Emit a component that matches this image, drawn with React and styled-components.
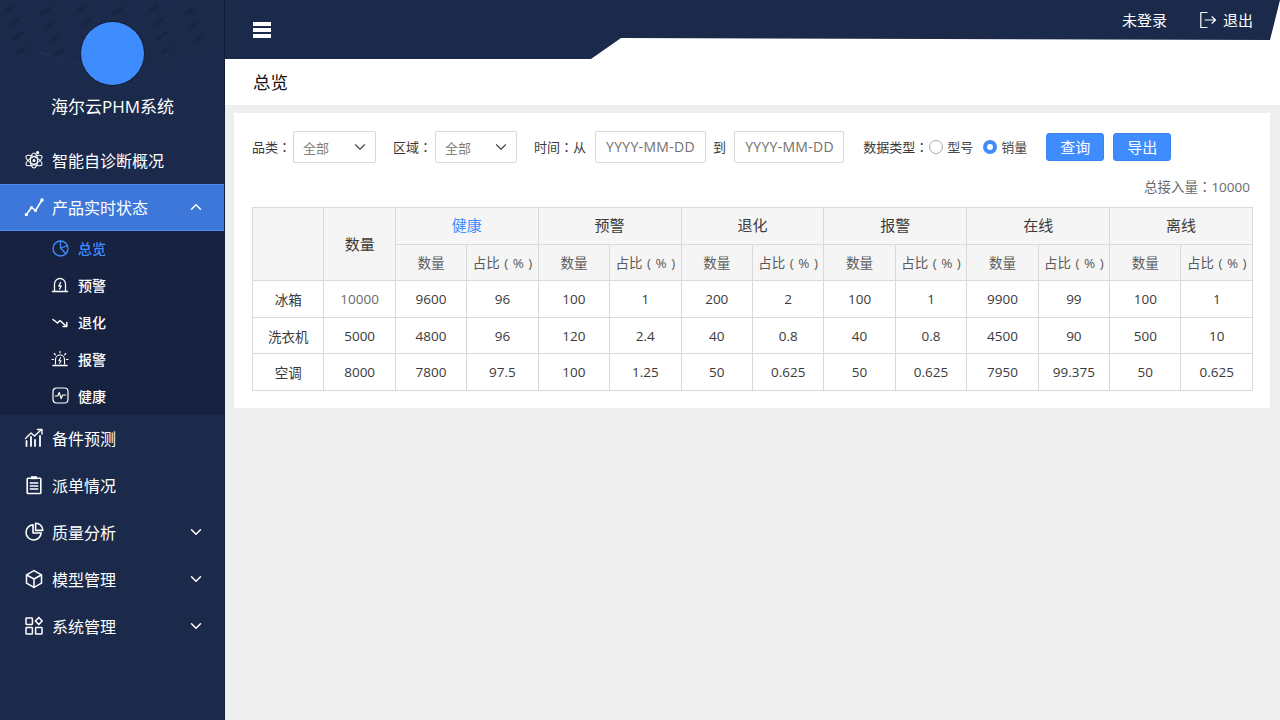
import React from 'react';
import styled, { createGlobalStyle } from 'styled-components';
import { ChevronUp, ChevronDown } from 'lucide-react';

const Global = createGlobalStyle`
  html, body { margin: 0; padding: 0; height: 100%; background: #eeeeee; }
  #root { height: 100%; }
  * { box-sizing: border-box; }
  body { font-family: "Open Sans", "Noto Sans CJK SC", sans-serif; overflow: hidden; }
`;

const Shell = styled.div`display: flex; width: 1280px; height: 720px;`;

const Sidebar = styled.aside`
  position: relative;
  width: 225px; flex: none; height: 720px;
  background: #1b2a4a;
  border-right: 1px solid #121d36;
  color: #fff;
  overflow: hidden;
`;
const SideArt = styled.svg`position: absolute; left: 0; top: 0; width: 224px; height: 135px;`;
const Brand = styled.div`
  position: relative;
  height: 137px; padding-top: 22px;
  display: flex; flex-direction: column; align-items: center;
`;
const LogoDisc = styled.div`
  width: 63px; height: 63px; border-radius: 50%;
  background: #3f8cff; margin-bottom: 10px; margin-left: 1px;
  box-shadow: 0 0 0 1px #141f38;
`;
const BrandName = styled.div`font-size: 17px; line-height: 24px; color: #fff; margin-left: 1px; white-space: nowrap;`;

const MenuItem = styled.div`
  height: 47px; display: flex; align-items: center;
  padding: 0 19px 2px 24px;
  font-size: 16px;
  background: ${p => (p.$active ? '#3e77da' : 'transparent')};
  ${p => p.$active && 'border-top: 1px solid #4a8df0; border-bottom: 1px solid #4a8df0;'}
`;
const IconSlot = styled.span`
  width: 20px; height: 20px; margin-right: 8px; flex: none;
  display: flex; align-items: center; justify-content: center;
`;
const MenuLabel = styled.span`flex: 1; white-space: nowrap;`;
const SubMenu = styled.div`background: #16223f; height: 184px;`;
const SubItem = styled.div`
  height: 36.8px; display: flex; align-items: center;
  padding: 0 0 2px 51px; font-size: 14px; font-weight: 500;
  color: ${p => (p.$active ? '#3f8cff' : '#fff')};
`;
const SubIcon = styled.span`
  width: 18px; height: 18px; margin-right: 9px; flex: none;
  display: flex; align-items: center; justify-content: center;
`;

const Main = styled.main`flex: 1; min-width: 0; display: flex; flex-direction: column;`;
const TopBar = styled.header`
  position: relative; height: 59px; background: #1b2a4a; color: #fff;
  display: flex; align-items: flex-start;
`;
const TopCut = styled.div`
  position: absolute; inset: 0;
  background: #fff;
  clip-path: polygon(366px 59px, 396px 38px, 1045px 40px, 1055px 0, 1055px 59px);
`;
const Burger = styled.button`
  position: relative; margin: 22px 0 0 28px; padding: 0; border: 0; background: none;
  width: 18px; height: 16px; display: flex; flex-direction: column; justify-content: space-between;
`;
const BurgerBar = styled.span`display: block; width: 18px; height: 4px; background: #fff;`;
const TopRight = styled.div`
  position: absolute; top: 9px; right: 27px; height: 22px;
  display: flex; align-items: center; font-size: 15px; line-height: 22px;
`;
const LogoutLink = styled.span`display: flex; align-items: center; margin-left: 32px; gap: 6px;`;

const TitleBar = styled.div`
  height: 46px; background: #fff; padding-left: 28px;
  font-size: 17.5px; line-height: 47px; color: #111;
`;
const Content = styled.div`flex: 1; padding: 8px 10px 0 9px; background: #eeeeee;`;
const Card = styled.section`background: #fff; padding: 18px 17px 18px 18px; height: 295px;`;

const Filters = styled.div`display: flex; align-items: center; height: 32px; font-size: 13px; color: #3a3a3a; white-space: nowrap;`;
const Label = styled.span`margin-right: ${p => p.$mr ?? 3}px; margin-left: ${p => p.$ml || 0}px; padding-bottom: 1px;`;
const Colon = styled.span`font-family: "Noto Sans CJK TC", sans-serif;`;
const Select = styled.div`
  width: ${p => p.$w}px; height: 32px; border: 1px solid #d9d9d9; border-radius: 2px;
  padding: 0 6px 0 9px; display: flex; align-items: center; justify-content: space-between;
  color: #808080; background: #fff;
`;
const DateBox = styled.div`
  width: ${p => p.$w}px; height: 32px; border: 1px solid #d9d9d9; border-radius: 2px;
  padding: 0 0 1px 10px; display: flex; align-items: center; color: #707070; font-size: 14px; letter-spacing: .3px;
`;
const Radio = styled.span`
  width: 14px; height: 14px; border-radius: 50%; margin: 0 4px 0 ${p => p.$ml || 0}px; flex: none;
  background: #fff;
  border: ${p => (p.$on ? '4px solid #3f8cff' : '1px solid #aaa')};
`;
const RadioText = styled.span`color: #4a4a4a; padding-bottom: 1px;`;
const Btn = styled.button`
  width: 58px; height: 28px; margin-left: ${p => p.$ml}px; padding: 0 0 1px;
  background: #3f8cff; border: 1px solid #3a84f2; border-radius: 3px;
  color: #fff; font: 15px "Open Sans", "Noto Sans CJK SC", sans-serif;
`;
const Total = styled.div`
  height: 22px; margin-top: 12px; margin-bottom: 10px; text-align: right; padding-right: 3px;
  font-size: 13.5px; line-height: 22px; color: #6a6a6a;
`;

const Table = styled.table`
  width: 1001px; border-collapse: collapse; table-layout: fixed;
  font-size: 13.5px; color: #3a3a3a; text-align: center;
`;
const Th = styled.th`
  border: 1px solid #d9d9d9; background: #f5f5f5;
  padding: 0 0 ${p => p.$pb ?? 1}px;
  font-weight: 400; height: ${p => p.$h || 36}px;
  font-size: ${p => (p.$sub ? 13.5 : 15)}px;
  word-spacing: ${p => (p.$sub ? '1px' : 0)};
  white-space: nowrap;
  color: ${p => (p.$blue ? '#3f8cff' : p.$sub ? '#5a5a5a' : '#3a3a3a')};
`;
const Td = styled.td`
  border: 1px solid #d9d9d9; padding: 0; height: 36.7px;
  color: ${p => (p.$muted ? '#6a6a6a' : '#3a3a3a')};
`;

const Stroke = ({ size = 20, vb = 20, children, color = '#fff', sw = 1.4 }) => (
  <svg width={size} height={size} viewBox={`0 0 ${vb} ${vb}`} fill="none" stroke={color} strokeWidth={sw} strokeLinecap="round" strokeLinejoin="round">{children}</svg>
);

const AtomIcon = () => (
  <Stroke sw={1.1}>
    <ellipse cx="10" cy="10.5" rx="9" ry="3.6" transform="rotate(28 10 10.5)" />
    <ellipse cx="10" cy="10.5" rx="9" ry="3.6" transform="rotate(-28 10 10.5)" />
    <ellipse cx="10" cy="10.5" rx="7.5" ry="3.6" transform="rotate(90 10 10.5)" />
    <circle cx="10" cy="10.5" r="1.5" fill="#fff" stroke="none" />
    <circle cx="13.6" cy="2.6" r="1.6" fill="#fff" stroke="none" />
  </Stroke>
);
const TrendIcon = () => (
  <Stroke sw={1.5}>
    <path d="M2 18 L7.5 10.5 L11.5 13.5 L18 3" />
    <circle cx="2.4" cy="17.6" r="1.7" fill="#fff" stroke="none" />
    <circle cx="7.5" cy="10.5" r="1.5" fill="#fff" stroke="none" />
    <circle cx="11.5" cy="13.5" r="1.5" fill="#fff" stroke="none" />
    <circle cx="18" cy="3" r="1.7" fill="#fff" stroke="none" />
  </Stroke>
);
const BarsIcon = () => (
  <Stroke>
    <path d="M1.5 10.5 L7 5 L10.5 8 L17 2" />
    <path d="M13.5 1.5 H18 V6" />
    <path d="M2.5 18V13M7 18V9M11 18V12M16 18V8" strokeWidth="1.8" />
  </Stroke>
);
const ClipboardIcon = () => (
  <Stroke>
    <rect x="3.2" y="3.2" width="13.6" height="15.3" rx="0.8" strokeWidth="1.6" />
    <rect x="7" y="1.2" width="6" height="3" fill="#fff" stroke="none" />
    <path d="M6.2 8H13.8M6.2 11H13.8M6.2 14H13.8" />
  </Stroke>
);
const PieIcon = () => (
  <Stroke sw={1.6}>
    <path d="M9 2.8 A7.6 7.6 0 1 0 17.2 11 H9 Z" />
    <path d="M11.6 1.2 A7.2 7.2 0 0 1 18.8 8.4 H11.6 Z" />
  </Stroke>
);
const CubeIcon = () => (
  <Stroke sw={1.5}>
    <path d="M10 1.6 L17.5 5.8 V14.2 L10 18.4 L2.5 14.2 V5.8 Z" />
    <path d="M2.7 6 L10 10 L17.3 6 M10 10 V18.2" />
  </Stroke>
);
const GridIcon = () => (
  <Stroke sw={1.5}>
    <rect x="2" y="2" width="6.4" height="6.4" rx="0.6" />
    <rect x="2" y="11.6" width="6.4" height="6.4" rx="0.6" />
    <rect x="11.6" y="11.6" width="6.4" height="6.4" rx="0.6" />
    <path d="M14.8 1.4 L18.2 5 L14.8 8.6 L11.4 5 Z" />
  </Stroke>
);
const OverviewIcon = () => (
  <Stroke size={17} vb={17} color="#3f8cff" sw={1.3}>
    <circle cx="8.5" cy="8.5" r="7.5" />
    <path d="M8.5 1.2 V8 L13.8 13.8 M8.5 8 L15.6 5.6" />
  </Stroke>
);
const WarnIcon = () => (
  <Stroke size={18} vb={18} sw={1.3}>
    <path d="M3.5 15 V8 A5.5 5.5 0 0 1 14.5 8 V15" />
    <path d="M1.5 15.5 H16.5" strokeWidth="1.6" />
    <path d="M9.6 6.5 L7.8 10 H10.2 L8.6 13" />
  </Stroke>
);
const DeclineIcon = () => (
  <Stroke size={18} vb={18} sw={1.5}>
    <path d="M2 6.5 L6.5 10 L9 7.5 L15 13" />
    <path d="M15.8 9.6 V13.6 H12" />
  </Stroke>
);
const AlarmIcon = () => (
  <Stroke size={18} vb={18} sw={1.1}>
    <path d="M4.5 14 V9.5 A4.5 4.5 0 0 1 13.5 9.5 V14" />
    <path d="M2 15.5 H16" strokeWidth="1.5" />
    <path d="M9.5 7.8 L7.9 10.8 H10.1 L8.6 13.2" />
    <path d="M9 1.2 V3 M3.2 3.5 L4.5 4.8 M14.8 3.5 L13.5 4.8 M1 9.5 H2.6 M15.4 9.5 H17" />
  </Stroke>
);
const HealthIcon = () => (
  <Stroke size={17} vb={17} sw={1.2}>
    <rect x="1" y="1" width="15" height="15" rx="3.5" />
    <path d="M3.2 9 H5.8 L7.2 5.4 L9.2 11.6 L10.6 8 H13.8" />
  </Stroke>
);
const LogoutIcon = () => (
  <svg width="18" height="18" viewBox="0 0 18 18" fill="none" stroke="#fff" strokeWidth="1.2" strokeLinecap="round" strokeLinejoin="round">
    <path d="M8 1.5 H1.8 V16.5 H8" />
    <path d="M6 9 H16.5 M13 5.8 L16.5 9 L13 12.2" />
  </svg>
);

const leaves = [];
for (let r = 0; r < 4; r++) {
  for (let c = 0; c < 6; c++) {
    leaves.push([10 + c * 36 + r * 4, 8 + r * 14 + (c % 2) * 3]);
  }
}
const rays = Array.from({ length: 13 }, (_, i) => -40 + i * 17);
const Art = () => (
  <SideArt viewBox="0 0 224 135" fill="none" stroke="#263757" strokeWidth="0.6">
    {leaves.filter(([x]) => x < 200).map(([x, y], i) => (
      <ellipse key={i} cx={x} cy={y} rx="6.5" ry="1.8" transform={`rotate(-35 ${x} ${y})`} fill="#172543" stroke="none" />
    ))}
    {rays.map((dx, i) => <path key={i} d={`M40 52 L${40 + dx} 92`} opacity="0.5" />)}
    <path d="M0 70 H85 M0 78 H85 M0 85 H85 M40 92 H100 V75 H40 Z" opacity="0.5" />
    <path d="M150 0 L172 70 M165 0 L186 62 M180 0 L198 55 M195 0 L208 48 M210 0 L216 40" opacity="0.4" />
    <path d="M154 135 L224 100" opacity="0.35" />
  </SideArt>
);

const groups = ['预警', '退化', '报警', '在线', '离线'];
const rows = [
  ['冰箱', '10000', '9600', '96', '100', '1', '200', '2', '100', '1', '9900', '99', '100', '1'],
  ['洗衣机', '5000', '4800', '96', '120', '2.4', '40', '0.8', '40', '0.8', '4500', '90', '500', '10'],
  ['空调', '8000', '7800', '97.5', '100', '1.25', '50', '0.625', '50', '0.625', '7950', '99.375', '50', '0.625'],
];
const menuBottom = [
  ['备件预测', <BarsIcon />, false],
  ['派单情况', <ClipboardIcon />, false],
  ['质量分析', <PieIcon />, true],
  ['模型管理', <CubeIcon />, true],
  ['系统管理', <GridIcon />, true],
];
const subs = [
  ['总览', <OverviewIcon />, true],
  ['预警', <WarnIcon />],
  ['退化', <DeclineIcon />],
  ['报警', <AlarmIcon />],
  ['健康', <HealthIcon />],
];

export default function App() {
  return (
    <Shell>
      <Global />
      <Sidebar>
        <Art />
        <Brand>
          <LogoDisc />
          <BrandName>海尔云PHM系统</BrandName>
        </Brand>
        <MenuItem>
          <IconSlot><AtomIcon /></IconSlot>
          <MenuLabel>智能自诊断概况</MenuLabel>
        </MenuItem>
        <MenuItem $active>
          <IconSlot><TrendIcon /></IconSlot>
          <MenuLabel>产品实时状态</MenuLabel>
          <ChevronUp size={18} color="#fff" strokeWidth={2} />
        </MenuItem>
        <SubMenu>
          {subs.map(([t, icon, active]) => (
            <SubItem key={t} $active={active}>
              <SubIcon>{icon}</SubIcon>{t}
            </SubItem>
          ))}
        </SubMenu>
        {menuBottom.map(([t, icon, chev]) => (
          <MenuItem key={t}>
            <IconSlot>{icon}</IconSlot>
            <MenuLabel>{t}</MenuLabel>
            {chev && <ChevronDown size={18} color="#fff" strokeWidth={2} />}
          </MenuItem>
        ))}
      </Sidebar>
      <Main>
        <TopBar>
          <TopCut />
          <Burger aria-label="menu"><BurgerBar /><BurgerBar /><BurgerBar /></Burger>
          <TopRight>
            未登录
            <LogoutLink><LogoutIcon />退出</LogoutLink>
          </TopRight>
        </TopBar>
        <TitleBar>总览</TitleBar>
        <Content>
          <Card>
            <Filters>
              <Label $mr={2}>品类<Colon>：</Colon></Label>
              <Select $w={83}>全部<ChevronDown size={18} color="#444" strokeWidth={1.5} /></Select>
              <Label $ml={17} $mr={3}>区域<Colon>：</Colon></Label>
              <Select $w={82}>全部<ChevronDown size={18} color="#444" strokeWidth={1.5} /></Select>
              <Label $ml={17} $mr={9}>时间<Colon>：</Colon>从</Label>
              <DateBox $w={111}>YYYY-MM-DD</DateBox>
              <Label $ml={7} $mr={8}>到</Label>
              <DateBox $w={110}>YYYY-MM-DD</DateBox>
              <Label $ml={19} $mr={1}>数据类型<Colon>：</Colon></Label>
              <Radio /><RadioText>型号</RadioText>
              <Radio $on $ml={10} /><RadioText>销量</RadioText>
              <Btn $ml={19}>查询</Btn>
              <Btn $ml={9}>导出</Btn>
            </Filters>
            <Total>总接入量<Colon>：</Colon>10000</Total>
            <Table>
              <thead>
                <tr>
                  <Th rowSpan={2} />
                  <Th rowSpan={2} $pb={2}>数量</Th>
                  <Th colSpan={2} $blue $h={37} $pb={3}>健康</Th>
                  {groups.map(g => <Th key={g} colSpan={2} $h={37} $pb={3}>{g}</Th>)}
                </tr>
                <tr>
                  {Array.from({ length: 6 }).flatMap((_, i) => [
                    <Th key={`a${i}`} $sub>数量</Th>,
                    <Th key={`b${i}`} $sub>占比 ( % )</Th>,
                  ])}
                </tr>
              </thead>
              <tbody>
                {rows.map(r => (
                  <tr key={r[0]}>
                    {r.map((c, i) => <Td key={i} $muted={r[0] === '冰箱' && i === 1}>{c}</Td>)}
                  </tr>
                ))}
              </tbody>
            </Table>
          </Card>
        </Content>
      </Main>
    </Shell>
  );
}
